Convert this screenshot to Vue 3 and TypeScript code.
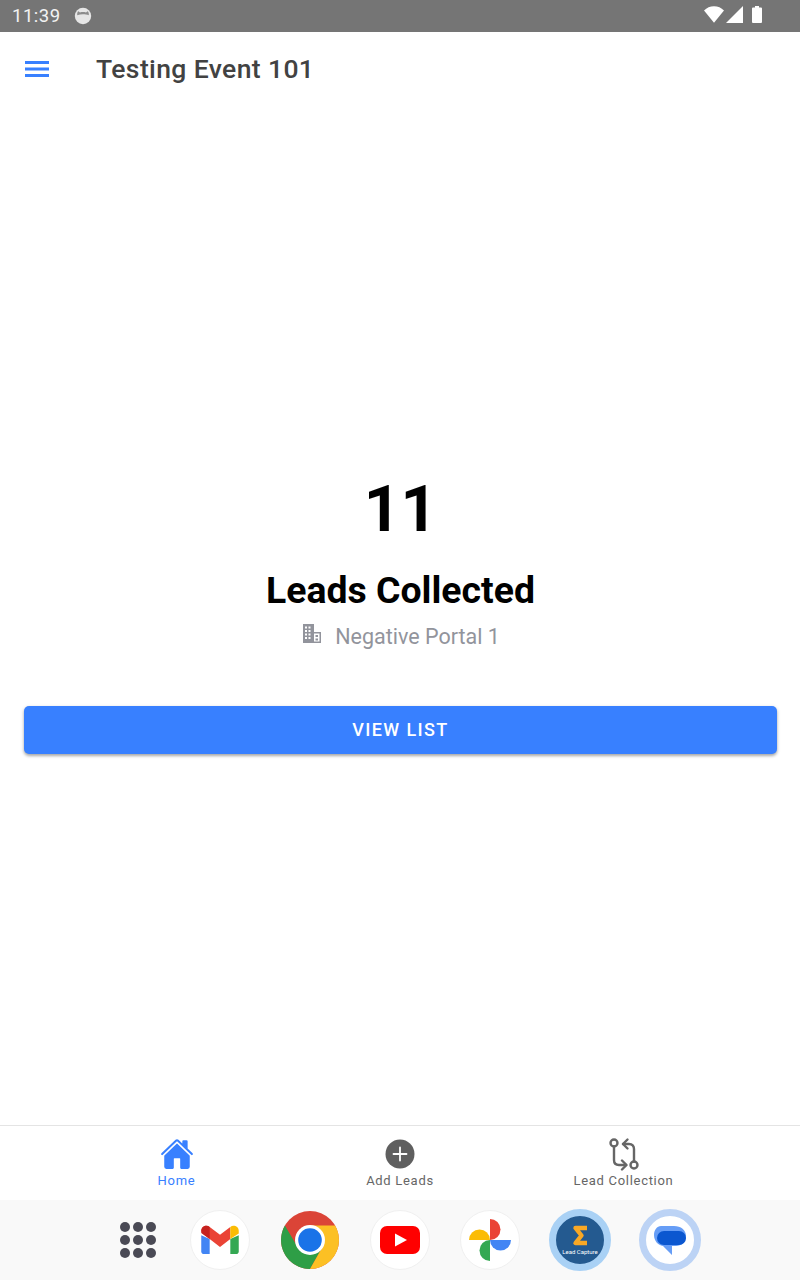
<template>
  <div class="screen">
    <!-- Android status bar -->
    <div class="status-bar">
      <span class="time">11:39</span>
      <svg class="status-app" width="18" height="18" viewBox="0 0 18 18">
        <circle cx="9" cy="9" r="8.2" fill="#e6e6e6" />
        <path d="M3.2 8.2C3 6 3.6 4.6 4.4 4.2L6 5.4C7.8 4.8 10.2 4.8 12 5.4L13.6 4.2C14.4 4.6 15 6 14.8 8.2C11.5 6.8 6.5 6.8 3.2 8.2Z" fill="#8c8c8c" />
      </svg>
      <span class="status-spacer"></span>
      <svg class="status-icon" width="20" height="17" viewBox="0 0 20 17">
        <path d="M0 4.5C2.7 1.8 6.1 0.3 10 0.3C13.9 0.3 17.3 1.8 20 4.5L10 16.8Z" fill="#fff" />
      </svg>
      <svg class="status-icon signal" width="17" height="17" viewBox="0 0 17 17">
        <path d="M17 0V17H0Z" fill="#fff" />
      </svg>
      <svg class="status-icon battery" width="10" height="17" viewBox="0 0 10 17">
        <path d="M3 0H7V1.5H9A1 1 0 0 1 10 2.5V16A1 1 0 0 1 9 17H1A1 1 0 0 1 0 16V2.5A1 1 0 0 1 1 1.5H3Z" fill="#fff" />
      </svg>
    </div>

    <!-- App header -->
    <header class="app-bar">
      <svg class="menu" width="24" height="18" viewBox="0 0 24 18">
        <path d="M0 2.5H24M0 9H24M0 15.5H24" stroke="#3880ff" stroke-width="2.8" />
      </svg>
      <h1 class="title">Testing Event 101</h1>
    </header>

    <!-- Main content -->
    <main class="content">
      <div class="count">11</div>
      <div class="count-label">Leads Collected</div>
      <div class="portal">
        <svg width="20" height="20" viewBox="0 0 20 20">
          <path fill-rule="evenodd" fill="#92949c" d="M1 0H12V8H19V19H1ZM3 2.5V4.5H5V2.5ZM6.5 2.5V4.5H8.5V2.5ZM3 6V8H5V6ZM6.5 6V8H8.5V6ZM3 9.5V11.5H5V9.5ZM6.5 9.5V11.5H8.5V9.5ZM3 13V15H5V13ZM6.5 13V15H8.5V13ZM12 9.5V17.5H17.500V9.5ZM13.5 11H16V13H13.5ZM13.5 14.5H16V16.5H13.5Z" />
        </svg>
        <span>Negative Portal 1</span>
      </div>
      <button class="view-list" type="button">VIEW LIST</button>
    </main>

    <!-- Tab bar -->
    <nav class="tab-bar">
      <div class="tab active">
        <svg width="34" height="34" viewBox="0 0 512 512">
          <path fill="#3880ff" d="M261.56 101.28a8 8 0 00-11.06 0L66.4 277.15a8 8 0 00-2.47 5.79L63.9 448a32 32 0 0032 32h96.1a16 16 0 0016-16V328a8 8 0 018-8h80a8 8 0 018 8v136a16 16 0 0016 16h96.06a32 32 0 0032-32V282.94a8 8 0 00-2.47-5.79z" />
          <path fill="#3880ff" d="M490.91 244.15l-74.8-71.56V64a16 16 0 00-16-16h-48a16 16 0 00-16 16v32l-57.92-55.38C272.77 35.14 264.71 32 256 32c-8.68 0-16.72 3.14-22.14 8.63l-212.7 203.5c-6.22 6-7 15.87-1.34 22.37A16 16 0 0043 267.56L250.5 69.28a8 8 0 0111.06 0l207.52 198.28a16 16 0 0022.59-.44c6.14-6.36 5.63-16.86-.76-22.97z" />
        </svg>
        <span>Home</span>
      </div>
      <div class="tab">
        <svg width="34" height="34" viewBox="0 0 34 34">
          <circle cx="17" cy="17" r="14.5" fill="#5f5f5f" />
          <path d="M17 10.5V23.5M10.5 17H23.5" stroke="#fff" stroke-width="1.8" stroke-linecap="round" />
        </svg>
        <span>Add Leads</span>
      </div>
      <div class="tab">
        <svg width="34" height="34" viewBox="0 0 34 34" fill="none" stroke="#666" stroke-width="2.4" stroke-linecap="round" stroke-linejoin="round">
          <circle cx="7" cy="6" r="3.5" />
          <circle cx="27" cy="28" r="3.5" />
          <path d="M7 9.5V23Q7 28 12 28H19" />
          <path d="M15 23.5L19.5 28L15 32.5" />
          <path d="M27 24.5V12Q27 7 22 7H16" />
          <path d="M20.5 2.5L16 7L20.5 11.5" />
        </svg>
        <span>Lead Collection</span>
      </div>
    </nav>

    <!-- Launcher dock -->
    <div class="dock">
      <div class="apps-grid">
        <i v-for="n in 9" :key="n"></i>
      </div>
      <div class="dock-icon">
        <svg width="40" height="30" viewBox="0 0 42 32">
          <path d="M1 11V28Q1 31 4 31H10V15Z" fill="#4285f4" />
          <path d="M32 15V31H38Q41 31 41 28V11Z" fill="#34a853" />
          <path d="M1 6.5C1 1.5 6.5 -0.5 10 2L21 10.5L32 2L32 15L21 23.5L10 15L3 9.5Z" fill="#ea4335" />
          <path d="M1 6.5C1 1.5 6.5 -0.5 10 2V15L1 8.5Z" fill="#c5221f" />
          <path d="M32 2C35.5 -0.5 41 1.5 41 6.5V9L32 15Z" fill="#fbbc04" />
        </svg>
      </div>
      <svg class="chrome" width="60" height="60" viewBox="0 0 60 60">
        <circle cx="30" cy="30" r="29" fill="#db4437" />
        <path d="M4.9 15.5A29 29 0 0 0 30 59L42.5 37H17.5Z" fill="#2e9e46" />
        <path d="M55.1 15.5A29 29 0 0 1 30 59L42.5 37L30 15.5Z" fill="#fcc024" />
        <circle cx="30" cy="30" r="15" fill="#fff" />
        <circle cx="30" cy="30" r="11.8" fill="#1a73e8" />
      </svg>
      <div class="dock-icon">
        <svg width="40" height="28" viewBox="0 0 40 28">
          <rect width="40" height="28" rx="7" fill="#f00" />
          <path d="M15 7.5L27 14L15 20.5Z" fill="#fff" />
        </svg>
      </div>
      <div class="dock-icon">
        <svg width="42" height="42" viewBox="0 0 42 42">
          <path d="M21 21V0A10.5 10.5 0 0 1 21 21Z" fill="#ea4335" />
          <path d="M21 21H0A10.5 10.5 0 0 1 21 21Z" fill="#fbbc04" />
          <path d="M21 21V42A10.5 10.5 0 0 1 21 21Z" fill="#34a853" />
          <path d="M21 21H42A10.5 10.5 0 0 1 21 21Z" fill="#4285f4" />
        </svg>
      </div>
      <div class="dock-icon lead-capture">
        <svg class="sigma" width="17" height="21" viewBox="0 0 17 21" fill="none" stroke="#f9a825" stroke-width="4.4" stroke-linejoin="round">
          <path d="M15 3H3.500L9.500 10.500L3.500 18H15" />
        </svg>
        <span class="lead-text">Lead Capture</span>
      </div>
      <div class="dock-icon messages">
        <svg width="34" height="32" viewBox="0 0 34 32">
          <path d="M8 2H21C28 2 33 6 33 12C33 18 28 22 23 22H19V31L10 22C5 21 1 17 1 11C1 6 4 2 8 2Z" fill="#669df6" />
          <rect x="4" y="7" width="29" height="14" rx="7" fill="#0b57d0" />
        </svg>
      </div>
    </div>
  </div>
</template>

<script setup lang="ts">
// Static screen, nothing to wire up yet
</script>

<style>
html,
body {
  margin: 0;
  background: #fff;
}
</style>

<style scoped>
.screen {
  width: 800px;
  height: 1280px;
  display: flex;
  flex-direction: column;
  overflow: hidden;
  font-family: Roboto, "Liberation Sans", sans-serif;
  background: #fff;
}

.status-bar {
  height: 32px;
  flex: none;
  display: flex;
  align-items: center;
  padding: 0 38px 0 12px;
  background: #757575;
  color: #f2f2f2;
}

.time {
  font-size: 18.5px;
  letter-spacing: 0.5px;
}

.status-app {
  margin-left: 13px;
}

.status-spacer {
  flex: 1;
}

.status-icon {
  margin-top: -3px;
}

.signal {
  margin-left: 2px;
}

.battery {
  margin-left: 9px;
}

.app-bar {
  height: 74px;
  flex: none;
  display: flex;
  align-items: center;
  padding-left: 25px;
}

.title {
  margin: 0 0 0 47px;
  font-size: 26.5px;
  font-weight: 500;
  line-height: 30px;
  color: #424242;
  letter-spacing: 0.38px;
}

.content {
  flex: 1;
  display: flex;
  flex-direction: column;
  align-items: center;
  padding: 366px 23px 0 24px;
}

.count {
  font-size: 64px;
  font-weight: 700;
  line-height: 76px;
  color: #000;
}

.count-label {
  margin-top: 21px;
  font-size: 37.4px;
  font-weight: 700;
  line-height: 42px;
  color: #000;
}

.portal {
  margin-top: 11px;
  display: flex;
  align-items: center;
  gap: 13px;
  font-size: 21.5px;
  line-height: 30px;
  color: #92949c;
}

.portal svg {
  margin: -6px 0 0 1px;
}

.view-list {
  width: 100%;
  height: 48px;
  flex: none;
  margin-top: 54px;
  padding: 0 0 2px;
  border: none;
  border-radius: 5px;
  background: #3880ff;
  box-shadow: 0 2px 3px rgba(0, 0, 0, 0.28), 0 1px 4px rgba(0, 0, 0, 0.12);
  color: #fff;
  font-family: inherit;
  font-size: 18px;
  font-weight: 500;
  letter-spacing: 1.4px;
}

.tab-bar {
  height: 75px;
  flex: none;
  display: flex;
  justify-content: center;
  border-top: 1px solid #e4e4e4;
  box-sizing: border-box;
}

.tab {
  width: 223.5px;
  display: flex;
  flex-direction: column;
  align-items: center;
  padding-top: 11px;
  color: #666;
  font-size: 13px;
  line-height: 15px;
  letter-spacing: 0.7px;
}

.tab svg {
  margin-bottom: 2px;
}

.tab.active {
  color: #3880ff;
}

.dock {
  height: 80px;
  flex: none;
  display: flex;
  align-items: center;
  gap: 30px;
  padding-left: 120px;
  background: #f9f9f9;
}

.apps-grid {
  width: 36px;
  height: 36px;
  display: grid;
  grid-template-columns: repeat(3, 10px);
  grid-auto-rows: 10px;
  gap: 3px;
  margin-right: 4px;
}

.apps-grid i {
  border-radius: 50%;
  background: #4a4a55;
}

.dock-icon {
  width: 60px;
  height: 60px;
  flex: none;
  box-sizing: border-box;
  display: flex;
  flex-direction: column;
  align-items: center;
  justify-content: center;
  border-radius: 50%;
  background: #fff;
  border: 1px solid #f0f0f0;
}

.chrome {
  flex: none;
}

.lead-capture {
  width: 62px;
  height: 62px;
  margin: 0 -1px;
  border: 7px solid #a9d1f5;
  background: #245a90;
  color: #fff;
}

.sigma {
  margin-top: 1px;
}

.lead-text {
  margin-top: 2px;
  font-size: 6px;
  line-height: 8px;
  white-space: nowrap;
}

.messages {
  width: 62px;
  height: 62px;
  margin: 0 -1px;
  border: 7px solid #bcd3f5;
}
</style>
